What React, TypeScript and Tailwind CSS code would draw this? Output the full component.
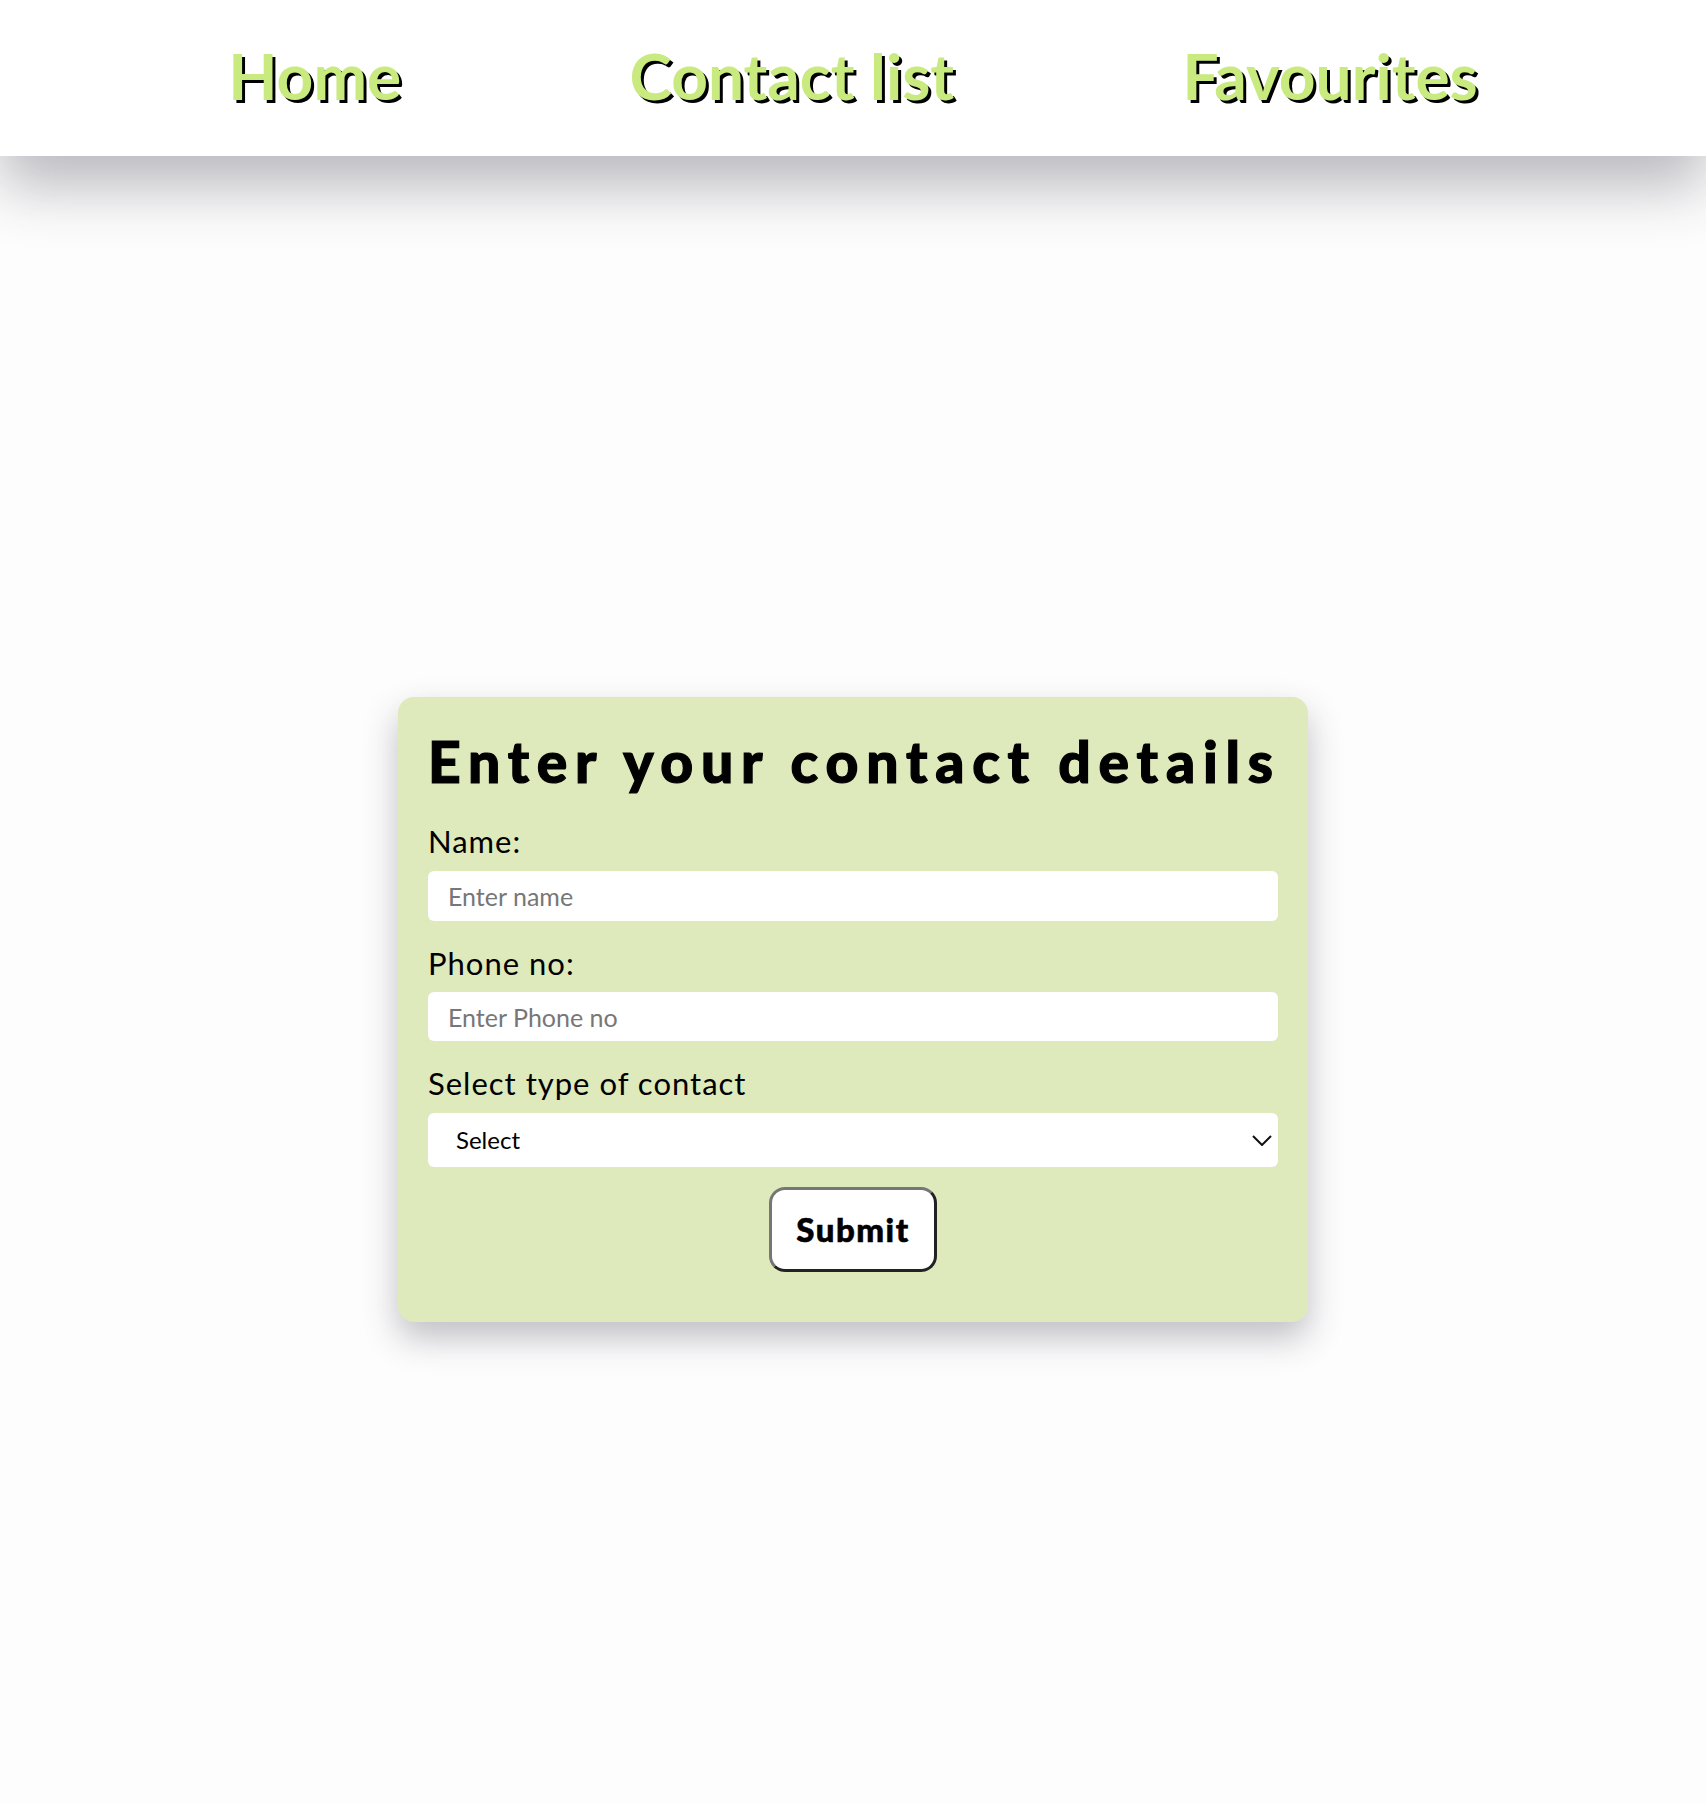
import { useState } from "react";

const font = "font-['Lato','Open_Sans','Liberation_Sans',sans-serif]";

export default function App() {
  const [name, setName] = useState("");
  const [phone, setPhone] = useState("");
  const [kind, setKind] = useState("");

  return (
    <div className={`min-h-[1804px] bg-[#fdfdfd] ${font}`}>
      {/* nav */}
      <nav className="relative z-10 h-[156px] bg-white shadow-[0_30px_60px_rgba(40,40,60,0.32)] flex items-center justify-evenly">
        {["Home", "Contact list", "Favourites"].map((item) => (
          <a
            key={item}
            href="#"
            className="text-[64px] leading-none font-bold text-[#c9ea7e] [text-shadow:3px_3px_0_#000] pb-1"
          >
            {item}
          </a>
        ))}
      </nav>

      <main className="flex justify-center pt-[541px]">
        <form
          onSubmit={(e) => e.preventDefault()}
          className="w-[910px] bg-[#dee9bc] rounded-2xl shadow-[0_16px_34px_rgba(50,50,70,0.3)] px-[30px] pt-9 pb-[50px] flex flex-col"
        >
          <h1 className="text-[57px] leading-none font-black tracking-[7.8px] [-webkit-text-stroke:1.2px_#000] text-black h-[56px] mb-[37px] whitespace-nowrap">
            Enter your contact details
          </h1>

          <label className="text-[31px] leading-none tracking-[1px] text-black h-[29px] mb-4">Name:</label>
          <input
            value={name}
            onChange={(e) => setName(e.target.value)}
            placeholder="Enter name"
            className="h-[50px] bg-white rounded-md px-5 text-[25px] text-black placeholder:text-[#777] outline-none mb-[27px]"
          />

          <label className="text-[31px] leading-none tracking-[1px] text-black h-[29px] mb-[15px]">Phone no:</label>
          <input
            value={phone}
            onChange={(e) => setPhone(e.target.value)}
            placeholder="Enter Phone no"
            className="h-[49px] bg-white rounded-md px-5 text-[25px] text-black placeholder:text-[#777] outline-none mb-[27px]"
          />

          <label className="text-[31px] leading-none tracking-[1px] text-black h-[29px] mb-4">Select type of contact</label>
          <div className="relative h-[54px] mb-5">
            <select
              value={kind}
              onChange={(e) => setKind(e.target.value)}
              className="appearance-none w-full h-full bg-white rounded-md pl-[28px] text-[24px] text-black outline-none"
            >
              <option value="">Select</option>
              <option value="personal">Personal</option>
              <option value="work">Work</option>
              <option value="family">Family</option>
            </select>
            <svg
              className="absolute right-[6px] top-[22px] pointer-events-none"
              width="20"
              height="11"
              viewBox="0 0 20 11"
              fill="none"
            >
              <path d="M1 1l9 9 9-9" stroke="#111" strokeWidth="2" />
            </svg>
          </div>

          <div className="flex justify-center">
            <button
              type="submit"
              className="w-[168px] h-[85px] bg-white rounded-2xl border-[3px] border-t-[#767676] border-l-[#767676] border-r-[#222] border-b-[#222] text-[33px] font-black tracking-[1.5px] [-webkit-text-stroke:0.6px_#000] text-black"
            >
              Submit
            </button>
          </div>
        </form>
      </main>
    </div>
  );
}
